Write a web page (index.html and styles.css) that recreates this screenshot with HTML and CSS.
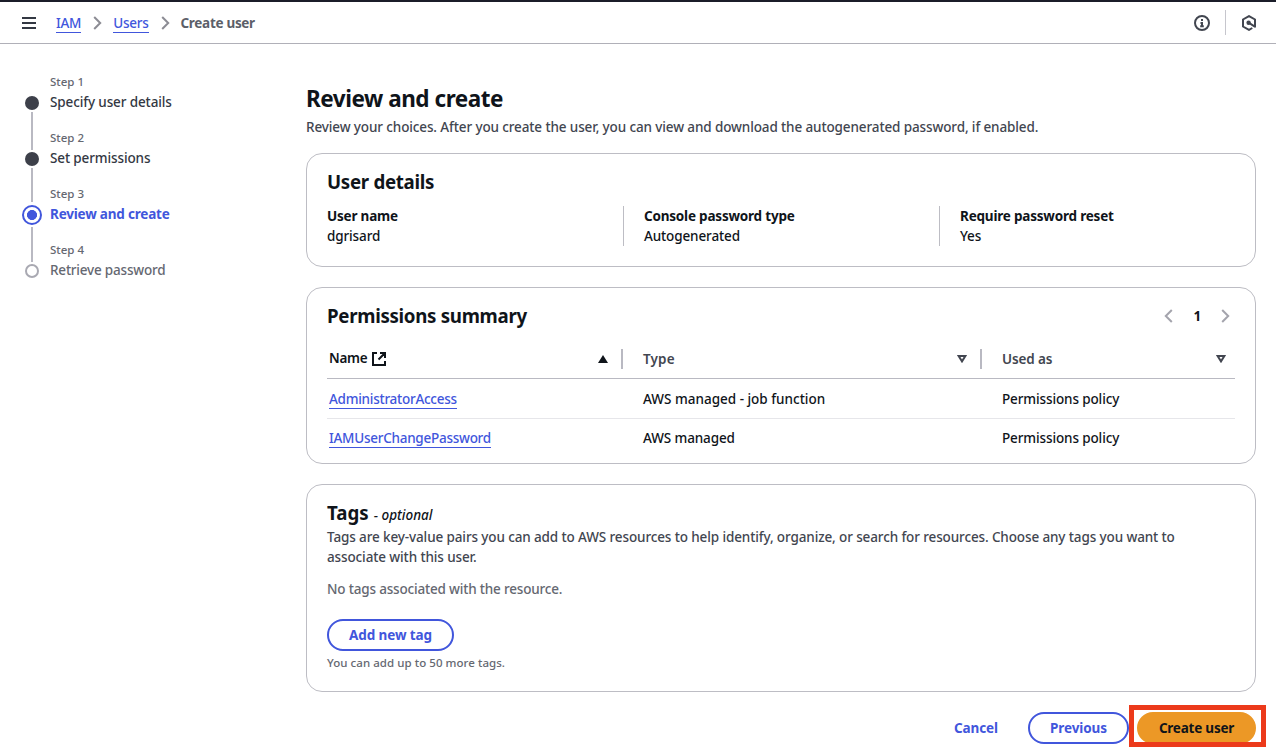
FILE: index.html
```html
<!DOCTYPE html>
<html lang="en">
<head>
<meta charset="utf-8">
<title>Create user | IAM</title>
<link rel="stylesheet" href="styles.css">
</head>
<body>
<header class="topbar">
  <svg class="menu" width="14" height="12" viewBox="0 0 14 12"><path d="M0 1h14M0 6h14M0 11h14"/></svg>
  <nav class="crumbs">
    <a class="link" href="#">IAM</a>
    <svg class="chev" width="9" height="14" viewBox="0 0 9 14"><path d="M1.2 1l6 6-6 6"/></svg>
    <a class="link" href="#">Users</a>
    <svg class="chev" width="9" height="14" viewBox="0 0 9 14"><path d="M1.2 1l6 6-6 6"/></svg>
    <span class="current">Create user</span>
  </nav>
  <div class="tools">
    <svg class="tool" width="16" height="16" viewBox="0 0 16 16"><circle cx="8" cy="8" r="7"/><path d="M8 4v2M6.5 7.9H8V12M6.2 11.3h3.6"/></svg>
    <span class="rule"></span>
    <svg class="tool" width="16" height="16" viewBox="0 0 16 16"><path d="M14 12.4V4.5L8 1.1 2 4.5v7l6 3.4 3.3-1.9M7.6 7.6l6.6 4.2"/><circle class="dot" cx="7.6" cy="7.7" r="2.2"/></svg>
  </div>
</header>
<div class="layout">
  <ol class="steps">
    <li class="step done"><small>Step 1</small><span class="label">Specify user details</span><i class="mark"></i></li>
    <li class="step done"><small>Step 2</small><span class="label">Set permissions</span><i class="mark"></i></li>
    <li class="step active"><small>Step 3</small><span class="label">Review and create</span><i class="mark"></i></li>
    <li class="step todo"><small>Step 4</small><span class="label">Retrieve password</span><i class="mark"></i></li>
  </ol>
  <main class="main">
    <h1>Review and create</h1>
    <p class="intro">Review your choices. After you create the user, you can view and download the autogenerated password, if enabled.</p>

    <section class="card">
      <h2>User details</h2>
      <dl class="cols">
        <div><dt>User name</dt><dd>dgrisard</dd></div>
        <div><dt>Console password type</dt><dd>Autogenerated</dd></div>
        <div><dt>Require password reset</dt><dd>Yes</dd></div>
      </dl>
    </section>

    <section class="card perms">
      <div class="card-head">
        <h2>Permissions summary</h2>
        <div class="pager">
          <svg width="9" height="14" viewBox="0 0 9 14"><path d="M7.8 1l-6 6 6 6"/></svg>
          <b>1</b>
          <svg width="9" height="14" viewBox="0 0 9 14"><path d="M1.2 1l6 6-6 6"/></svg>
        </div>
      </div>
      <div class="row head">
        <div class="cell sorted"><span class="name">Name</span><svg class="ext" width="14" height="14" viewBox="0 0 14 14"><path d="M5 1H1v12h12V9M8 1h5v5M13 1L6.5 7.5"/></svg><svg class="sort" width="10" height="8" viewBox="0 0 10 8"><path d="M5 0l5 8H0z"/></svg></div>
        <div class="cell"><span class="type">Type</span><svg class="sort open" width="10" height="8" viewBox="0 0 10 8"><path d="M1.6 1h6.8L5 6.4z"/></svg></div>
        <div class="cell"><span>Used as</span><svg class="sort open" width="10" height="8" viewBox="0 0 10 8"><path d="M1.6 1h6.8L5 6.4z"/></svg></div>
      </div>
      <div class="row">
        <div class="cell"><a class="link" href="#">AdministratorAccess</a></div>
        <div class="cell wide">AWS managed - job function</div>
        <div class="cell">Permissions policy</div>
      </div>
      <div class="row last">
        <div class="cell"><a class="link" href="#">IAMUserChangePassword</a></div>
        <div class="cell">AWS managed</div>
        <div class="cell">Permissions policy</div>
      </div>
    </section>

    <section class="card tags">
      <h2>Tags<em>- optional</em></h2>
      <p class="desc">Tags are key-value pairs you can add to AWS resources to help identify, organize, or search for resources. Choose any tags you want to<br>associate with this user.</p>
      <p class="none">No tags associated with the resource.</p>
      <button class="btn add">Add new tag</button>
      <p class="hint">You can add up to 50 more tags.</p>
    </section>

    <footer class="actions">
      <button class="btn plain">Cancel</button>
      <button class="btn prev">Previous</button>
      <div class="primary-wrap"><button class="btn primary">Create user</button><div class="highlight"></div></div>
    </footer>
  </main>
</div>
</body>
</html>
```
FILE: styles.css
```css
* { box-sizing: border-box; }

body {
  margin: 0;
  height: 750px;
  overflow: hidden;
  background: #fff;
  color: #0f141a;
  font: 500 13.5px/20px "Noto Sans", "Open Sans", sans-serif;
  letter-spacing: -0.12px;
}

h1, h2, p, dl, dd, ol { margin: 0; padding: 0; }
svg { display: block; flex: none; fill: none; stroke: currentColor; stroke-width: 2; }

.link {
  display: inline-block;
  margin-top: 1px;
  color: #4156dc;
  text-decoration: none;
  line-height: 18px;
  letter-spacing: -0.26px;
  border-bottom: 1px solid currentColor;
}

/* Top bar */
.topbar {
  display: flex;
  align-items: center;
  height: 44px;
  padding: 0 19px 0 22px;
  border-top: 2px solid #1b1d29;
  border-bottom: 1px solid #b0b0b8;
}
.menu { color: #333843; margin-right: 20px; }
.crumbs { display: flex; align-items: center; }
.crumbs .link { margin-top: 2px; }
.crumbs .chev { color: #8c8c94; margin: 0 11px 0 12px; }
.current { font-weight: 700; letter-spacing: -0.3px; color: #5c5f69; }
.tools { display: flex; align-items: center; margin-left: auto; color: #424650; }
.tools .rule { width: 1px; height: 25px; margin: 0 15px; background: #c6c6cd; }
.tool { stroke-width: 2; }
.tool .dot { fill: currentColor; stroke: none; }

.layout { display: flex; }

/* Wizard steps */
.steps { flex: none; width: 306px; padding: 28px 0 0 22px; list-style: none; }
.step {
  display: grid;
  grid-template-columns: 20px 1fr;
  grid-template-rows: 20px 20px 16px;
  column-gap: 8px;
  height: 56px;
}
.step small { grid-column: 2; justify-self: start; font-size: 11.5px; letter-spacing: 0; color: #656871; }
.step .label { grid-area: 2 / 2; justify-self: start; color: #333843; }
.step .mark {
  grid-area: 2 / 1;
  place-self: center;
  width: 14px;
  height: 14px;
  margin-top: 2px;
  border-radius: 50%;
  background: #3d404a;
}
.step::after {
  content: "";
  grid-area: 3 / 1;
  justify-self: center;
  width: 2px;
  height: 38px;
  background: #b9b9c2;
}
.step:nth-child(2)::after { height: 34px; }
.active::after { margin-top: 3px; height: 35px; }
.todo::after { display: none; }
.step.active .label { color: #4156dc; font-weight: 700; letter-spacing: -0.2px; }
.step.active .mark {
  width: 20px;
  height: 20px;
  border: 2px solid #4156dc;
  background: radial-gradient(circle, #4156dc 4.7px, #fff 5.3px);
}
.step.todo .label { color: #656871; letter-spacing: -0.2px; }
.step.todo .mark { border: 2px solid #a9a9b2; background: #fff; }

/* Main column */
.main { width: 950px; padding-top: 40px; }
h1 { font-size: 22.5px; line-height: 30px; letter-spacing: -0.46px; }
.intro { height: 39px; padding-top: 3px; color: #424650; white-space: nowrap; }
.card { margin-bottom: 20px; padding: 16px 20px 20px; border: 1px solid #bdbdc4; border-radius: 16px; }
h2 { font-size: 18.7px; line-height: 24px; letter-spacing: -0.3px; }

.cols { display: grid; grid-template-columns: 296px 316px 1fr; margin-top: 12px; }
.cols div + div { padding-left: 20px; border-left: 1px solid #bdbdc4; }
dt { font-weight: 700; letter-spacing: -0.2px; }

/* Permissions table */
.perms { height: 177px; padding-bottom: 0; }
.card-head { display: flex; justify-content: space-between; margin-bottom: 12px; }
.pager { display: flex; align-items: center; gap: 20px; padding-right: 5px; }
.pager svg { color: #a4a4ad; }
.row { display: grid; grid-template-columns: 296px 359px 1fr; height: 40px; border-bottom: 1px solid #e6e6ea; }
.row.head { height: 39px; border-color: #b9b9c2; font-weight: 600; color: #424650; }
.row.last { height: 38px; border: 0; }
.cell { display: flex; align-items: center; padding-left: 20px; }
.cell:first-child { padding-left: 2px; }
.wide { letter-spacing: 0; }
.head .cell { align-self: center; height: 20px; padding-right: 13px; border-right: 2px solid #b9b9c2; }
.head .cell:last-child { padding-right: 9px; border: 0; }
.head .sorted { color: #0f141a; }
.name { padding-bottom: 2px; letter-spacing: -0.3px; }
.type { letter-spacing: 0.15px; }
.ext { margin-left: 5px; }
.sort { margin-left: auto; fill: #0f141a; stroke: none; }
.sort.open { fill: none; stroke: currentColor; }

/* Tags */
.tags { height: 208px; padding-bottom: 0; }
.tags h2 { height: 24px; letter-spacing: 0; }
.tags em { margin-left: 5px; font-size: 13.5px; font-weight: 500; letter-spacing: 0; }
.desc { margin-top: 2px; color: #424650; white-space: nowrap; }
.none { margin-top: 12px; color: #656871; letter-spacing: -0.18px; }
.hint { margin-top: 2px; font-size: 11.5px; letter-spacing: 0.05px; color: #656871; }

/* Buttons */
.btn {
  display: block;
  height: 32px;
  padding: 0;
  border: 2px solid #4156dc;
  border-radius: 16px;
  background: none;
  color: #4156dc;
  font: 700 13.5px/20px "Noto Sans", "Open Sans", sans-serif;
  letter-spacing: -0.08px;
}
.add { width: 127px; margin-top: 20px; }
.actions { display: flex; justify-content: flex-end; gap: 8px; }
.plain { width: 88px; border-color: transparent; }
.prev { width: 101px; }
.primary { width: 119px; border-color: #ec9826; background: #ec9826; color: #0f141a; letter-spacing: -0.22px; }
.primary-wrap { position: relative; }
.highlight { position: absolute; inset: -7px -10px -3px -8px; border: 5px solid #ec3a1b; }
```
